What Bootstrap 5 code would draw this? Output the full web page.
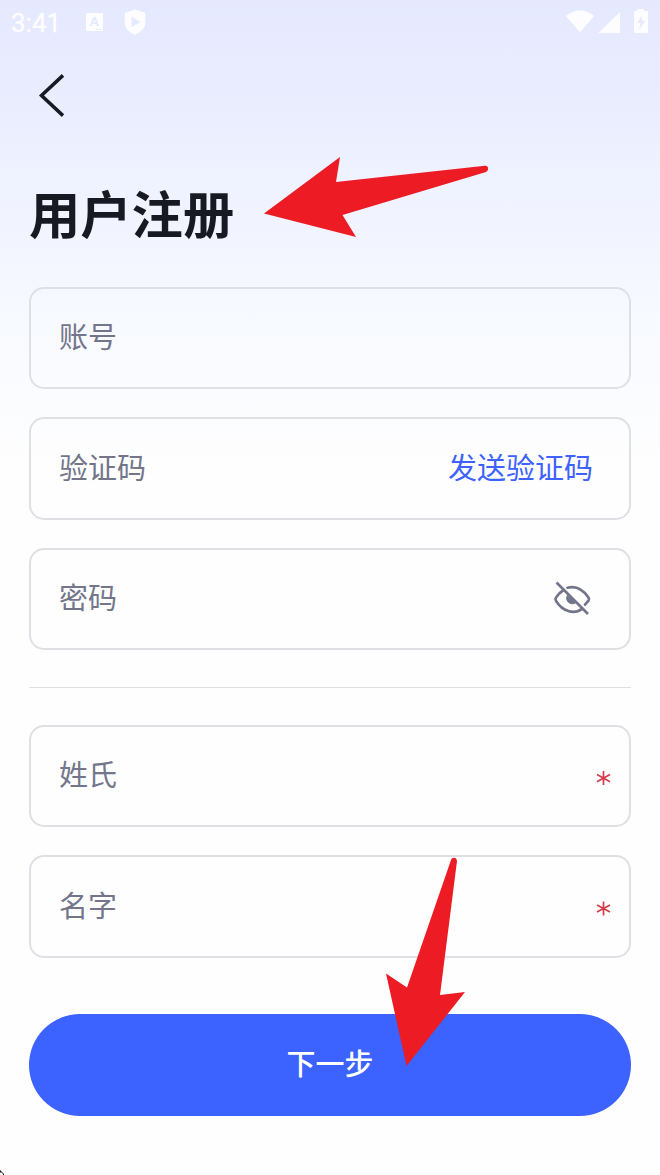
<!DOCTYPE html>
<html lang="zh-CN">
<head>
<meta charset="utf-8">
<meta name="viewport" content="width=device-width, initial-scale=1">
<title>用户注册</title>
<link href="https://cdn.jsdelivr.net/npm/bootstrap@5.3.0/dist/css/bootstrap.min.css" rel="stylesheet">
<style>
  body { font-family: Roboto, "Noto Sans CJK SC", sans-serif; color: #171a23; background: #fefefe; }
  .screen { height: 1175px; background: linear-gradient(#e5e9fe 0, #eaedfe 100px, #f1f4ff 220px, #f6f9ff 310px, #fbfcff 390px, #fefefe 470px); }
  .status { height: 44px; padding: 0 11px 0 11px; color: #fdfdff; }
  .clock { font-size: 26px; line-height: 30px; width: 74px; margin-top: 2px; -webkit-text-stroke: .3px; }
  .back { height: 103px; padding: 29px 0 0 37px; }
  .page-title { font-size: 51.3px; line-height: 74px; height: 139.8px; padding-top: 33px; margin: 0; font-weight: 700; }
  .content-area { padding: 0 29px; }
  .fields { gap: 28px; }
  .entry { height: 102.4px; border: 2px solid #dfe0e4; border-radius: 15px; padding: 0 37px 0 28px; font-size: 29px; color: #73768a; }
  .entry > span { padding-top: 2px; }
  .entry.required { padding-right: 17.5px; }
  .send { font-size: 29px; color: #3e62ff; line-height: 1.5; margin: 2px -1px 0 0; }
  .split { height: 1px; background: #dfe0e4; margin: 37px 0; }
  .next { height: 102px; margin-top: 56px; font-size: 29px; font-weight: 500; padding: 1px 0 0; --bs-btn-color: #fff; --bs-btn-bg: #3c62ff; --bs-btn-border-width: 0; --bs-btn-hover-bg: #3156ef; --bs-btn-hover-color: #fff; }
  .arrows { pointer-events: none; }
</style>
</head>
<body>
<main class="screen position-relative overflow-hidden">
  <header class="status d-flex align-items-center justify-content-between">
    <div class="d-flex align-items-center">
      <span class="clock">3:41</span>
      <svg width="64" height="28" viewBox="0 0 64 28" fill="currentColor" aria-hidden="true">
        <path fill-rule="evenodd" d="M2 5h15q1 0 1 1v16q0 1-1 1H2q-1 0-1-1V6q0-1 1-1zM8.2 9 4.7 18h2.1l.8-2h3.6l.8 2h2.1L10.6 9zm1.2 2.3 1.2 3.1H8.2z"/>
        <path d="M11 21h1v1h-1zm2 0h1v1h-1zm2 0h1v1h-1z" fill="#dfe4f5"/>
        <path fill-rule="evenodd" d="M50 1.5 60.2 5v10c0 5.5-4.5 9.5-10.2 11.8C44.300 24.500 39.800 20.500 39.800 15V5zM46.500 8.700v10.600l9-5.300z"/>
      </svg>
    </div>
    <svg width="84" height="28" viewBox="565 8 84 28" fill="currentColor" aria-hidden="true">
      <path d="M566 16q14-11 28 0L580 32.500z"/>
      <path d="M620 12v21h-21.500z"/>
      <path fill-rule="evenodd" d="M637 11v-2h7v2h3q1 0 1 1v20q0 1-1 1h-12q-1 0-1-1V12q0-1 1-1zM642 15l-4.500 8h3L639 30l6.500-9.500h-3.500z"/>
    </svg>
  </header>
  <nav class="back" aria-label="返回">
    <svg class="d-block" width="30" height="44" viewBox="37 73 30 44" fill="none" stroke="#171a23" stroke-width="3.500"><path d="M63 75.400 41.500 95.500 63 115.600"/></svg>
  </nav>
  <div class="content-area">
    <h1 class="page-title">用户注册</h1>
    <div class="fields d-flex flex-column">
      <div class="entry d-flex align-items-center justify-content-between"><span>账号</span></div>
      <div class="entry d-flex align-items-center justify-content-between"><span>验证码</span><button type="button" class="send btn p-0 border-0">发送验证码</button></div>
      <div class="entry d-flex align-items-center justify-content-between"><span>密码</span>
        <svg width="40" height="36" viewBox="552 580 40 36" fill="none" stroke="#73768a" stroke-width="2.700" stroke-linecap="round" aria-label="显示密码">
          <path d="M567.500 586.700c8.800-2.300 16 2.500 21 9.700q1.200 1.700 0 3.300l-3.500 4M563 589.500q-4 2.500-7 7-1.200 1.700 0 3.400c6.500 10 17.500 14.500 26.500 7.700"/>
          <path d="M567.300 594.500c-3.200 5.800 4.500 11.200 9 6.800z" fill="#73768a" stroke-width="1"/>
          <path d="m556.500 581.500 31.500 31.500" stroke-linecap="butt"/>
        </svg>
      </div>
    </div>
    <div class="split"></div>
    <div class="fields d-flex flex-column">
      <div class="entry required d-flex align-items-center justify-content-between"><span>姓氏</span>
        <svg class="mt-1" width="17" height="17" viewBox="-8.500 -8.100 17 17" stroke="#d43c4b" stroke-width="1.700" aria-label="必填"><path d="M0-7V7M-6.500-3.600l13 7.200M-6.500 3.600l13-7.200"/></svg>
      </div>
      <div class="entry required d-flex align-items-center justify-content-between"><span>名字</span>
        <svg class="mt-1" width="17" height="17" viewBox="-8.500 -8.500 17 17" stroke="#d43c4b" stroke-width="1.700" aria-label="必填"><path d="M0-7V7M-6.500-3.600l13 7.200M-6.500 3.600l13-7.200"/></svg>
      </div>
    </div>
    <button type="button" class="next btn rounded-pill w-100">下一步</button>
  </div>
  <svg class="arrows position-absolute top-0 start-0" width="660" height="1175" viewBox="0 0 660 1175" fill="#ed1c24" aria-hidden="true">
    <path d="M264 213.500 340 157l-4 25 149-16.200c4-.2 4 5 1 6.200L342.500 215l13.500 22z"/>
    <path d="M406.500 1066 386 973.500l21 14L451 860c1-3.500 6-3 6 1l-17 134 25-3z"/>
    <path d="M0 1170.500h1v1h1v1h-2zM2 1172.500h1v1H2zM3 1173.500h1v1.500H3z" fill="#111"/>
  </svg>
</main>
<script src="https://cdn.jsdelivr.net/npm/bootstrap@5.3.0/dist/js/bootstrap.bundle.min.js"></script>
</body>
</html>
